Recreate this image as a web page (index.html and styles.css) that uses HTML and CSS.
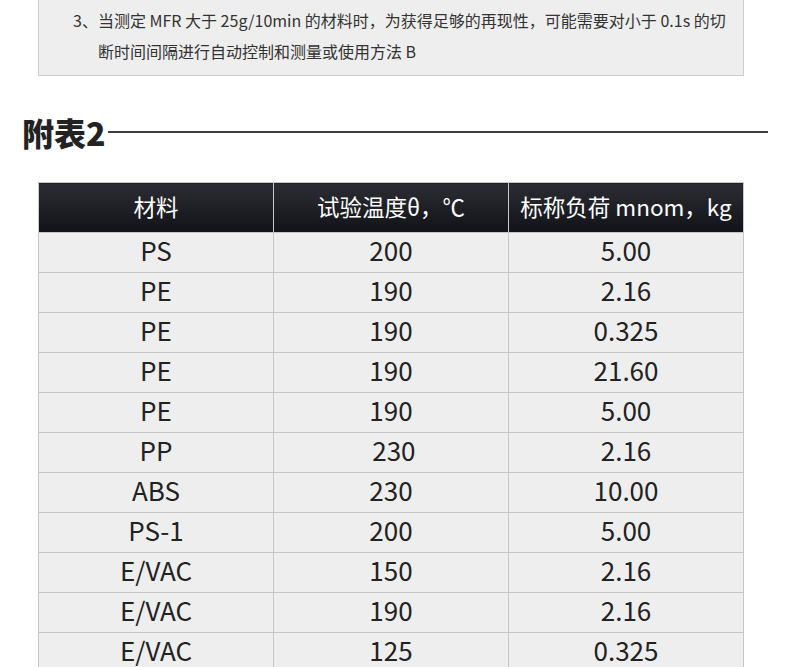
FILE: index.html
```html
<!DOCTYPE html>
<html lang="zh">
<head>
<meta charset="utf-8">
<link rel="stylesheet" href="styles.css">
</head>
<body>
<div class="note">
  <p class="item">3、当测定 MFR 大于 25g/10min 的材料时，为获得足够的再现性，可能需要对小于 0.1s 的切断时间间隔进行自动控制和测量或使用方法 B</p>
</div>
<div class="title-row">
  <h2 class="title">附表2</h2>
  <div class="rule"></div>
</div>
<table class="data">
  <thead>
    <tr><th>材料</th><th>试验温度θ，℃</th><th>标称负荷 mnom，kg</th></tr>
  </thead>
  <tbody>
    <tr><td>PS</td><td>200</td><td>5.00</td></tr>
    <tr><td>PE</td><td>190</td><td>2.16</td></tr>
    <tr><td>PE</td><td>190</td><td>0.325</td></tr>
    <tr><td>PE</td><td>190</td><td>21.60</td></tr>
    <tr><td>PE</td><td>190</td><td>5.00</td></tr>
    <tr><td>PP</td><td>&nbsp;230</td><td>2.16</td></tr>
    <tr><td>ABS</td><td>230</td><td>10.00</td></tr>
    <tr><td>PS-1</td><td>200</td><td>5.00</td></tr>
    <tr><td>E/VAC</td><td>150</td><td>2.16</td></tr>
    <tr><td>E/VAC</td><td>190</td><td>2.16</td></tr>
    <tr><td>E/VAC</td><td>125</td><td>0.325</td></tr>
  </tbody>
</table>
</body>
</html>
```
FILE: styles.css
```css
html, body {
  margin: 0;
  padding: 0;
  background: #fff;
}
body {
  font-family: "Noto Sans CJK SC", sans-serif;
  color: #222;
  overflow: hidden;
}
.note {
  box-sizing: border-box;
  width: 706px;
  margin: 0 0 0 38px;
  background: #eeeeee;
  border: 1px solid #cccccc;
  border-top: none;
  padding: 5px 8px 8px 59px;
}
.item {
  margin: 0;
  font-family: "Noto Sans CJK SC", sans-serif;
  font-size: 16px;
  line-height: 31px;
  color: #333;
  text-indent: -25px;
}
.title-row {
  display: flex;
  align-items: center;
  margin: 36px 22px 0 22px;
  height: 40px;
}
.title {
  margin: 0;
  font-family: "Noto Sans CJK SC", sans-serif;
  font-weight: 900;
  font-size: 32px;
  line-height: 40px;
  color: #222;
}
.rule {
  flex: 1;
  height: 2px;
  background: #3d3d3d;
  margin-left: 2px;
}
.data {
  margin: 30px 0 0 38px;
  width: 706px;
  border-collapse: collapse;
  table-layout: fixed;
}
.data th {
  height: 50px;
  padding: 0 0 3px 0;
  box-sizing: border-box;
  background: linear-gradient(#2c2d34, #121318);
  color: #fff;
  font-weight: 400;
  font-size: 22.5px;
  border: 1px solid #c8c8c8;
  border-bottom: none;
  white-space: nowrap;
}
.data td {
  height: 40px;
  box-sizing: border-box;
  padding: 0 0 5px 0;
  background: #eeeeee;
  border: 1px solid #c6c6c6;
  text-align: center;
  font-size: 26px;
  color: #222;
  line-height: 34px;
}
```
